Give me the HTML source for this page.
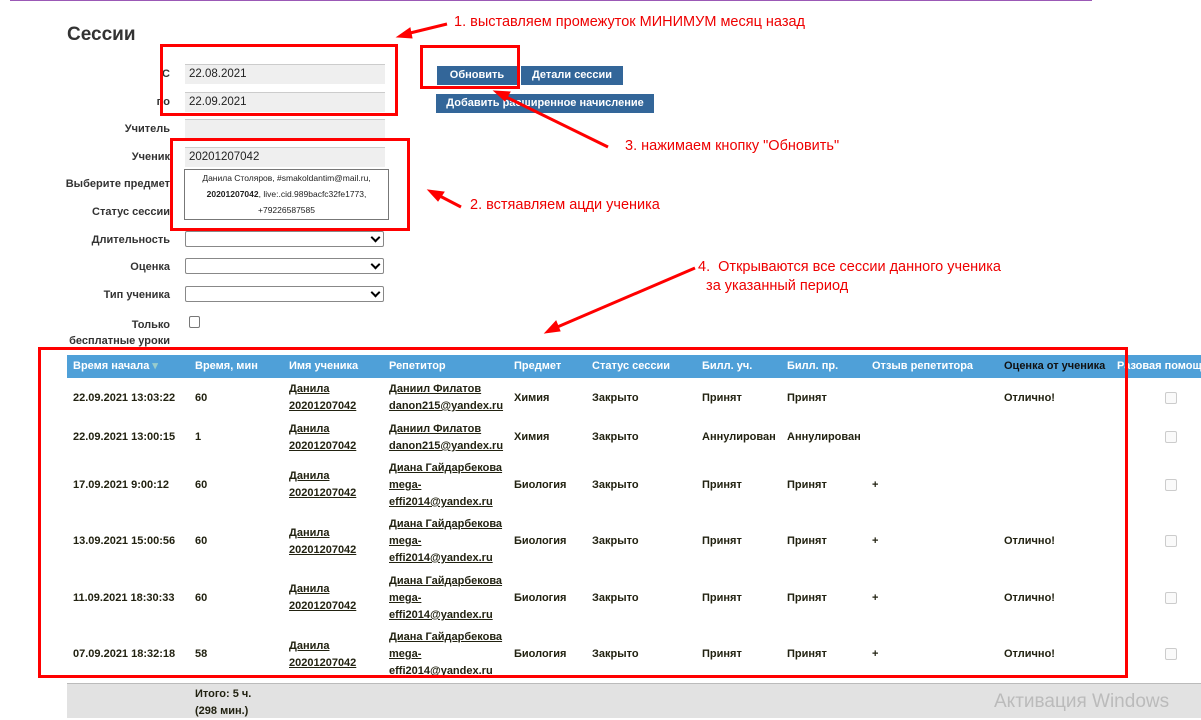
<!DOCTYPE html>
<html><head><meta charset="utf-8"><style>
body{margin:0;width:1201px;height:717px;overflow:hidden;background:#fff;font-family:"Liberation Sans",sans-serif;position:relative}
.a{position:absolute;white-space:nowrap}
.l{font-size:11px;font-weight:bold;color:#333;text-align:right;width:170px;left:0}
.in{position:absolute;left:185px;width:200px;height:20px;background:#efefef;border-top:1px solid #ccc;box-sizing:border-box;font-size:11.5px;color:#222;padding:3px 4px}
.sel{position:absolute;left:185px;width:199px;height:16px;border:1px solid #888;border-radius:2px;box-sizing:border-box;background:#fff}
.sel:after{content:"";position:absolute;right:4px;top:2px;width:5px;height:5px;border-right:2px solid #000;border-bottom:2px solid #000;transform:rotate(45deg)}
.btn{position:absolute;background:#336699;color:#fff;font-size:11px;font-weight:bold;text-align:center;line-height:19px;height:19px}
.rb{position:absolute;border:3px solid #f00;box-sizing:border-box}
.red{position:absolute;color:#e00;font-size:14.5px;white-space:nowrap}
.c{position:absolute;font-size:11px;font-weight:bold;color:#221;white-space:nowrap;line-height:17px}
.u{text-decoration:underline}
.h{position:absolute;top:355px;font-size:11px;font-weight:bold;color:#fff;line-height:23px;white-space:nowrap}
.cb{position:absolute;left:1165px;width:10px;height:10px;border:1px solid #ccc;border-radius:2px;background:#fafafa}
</style></head><body>
<div class="a" style="left:10px;top:0;width:1082px;height:1px;background:#9b59b6"></div>
<div class="a" style="left:67px;top:24px;font-size:19px;font-weight:bold;color:#333">Сессии</div>

<div class="a l" style="top:68px">С</div>
<div class="a l" style="top:96px">по</div>
<div class="a l" style="top:123px">Учитель</div>
<div class="a l" style="top:151px">Ученик</div>
<div class="a l" style="top:178px">Выберите предмет</div>
<div class="a l" style="top:206px">Статус сессии</div>
<div class="a l" style="top:234px">Длительность</div>
<div class="a l" style="top:261px">Оценка</div>
<div class="a l" style="top:289px">Тип ученика</div>
<div class="a l" style="top:317px;line-height:16px">Только<br>бесплатные уроки</div>

<div class="in" style="top:64px">22.08.2021</div>
<div class="in" style="top:92px">22.09.2021</div>
<div class="in" style="top:119px"></div>
<div class="in" style="top:147px">20201207042</div>
<div class="a" style="left:184px;top:169px;width:205px;height:51px;border:1px solid #777;box-sizing:border-box;background:#fff;font-size:8.5px;color:#222;text-align:center;line-height:16px;white-space:normal">Данила Столяров, #smakoldantim@mail.ru, <b>20201207042</b>, live:.cid.989bacfc32fe1773, +79226587585</div>
<div class="sel" style="top:231px"></div>
<div class="sel" style="top:258px"></div>
<div class="sel" style="top:286px"></div>
<div class="a" style="left:189px;top:316px;width:9px;height:10px;border:1px solid #777;border-radius:2px"></div>

<div class="btn" style="left:437px;top:66px;width:80px">Обновить</div>
<div class="btn" style="left:521px;top:66px;width:102px">Детали сессии</div>
<div class="btn" style="left:436px;top:94px;width:218px">Добавить расширенное начисление</div>

<div class="a" style="left:67px;top:355px;width:1134px;height:23px;background:#4fa0d8"></div>
<div class="h" style="left:73px">Время начала <span style="color:#9cc">▾</span></div>
<div class="h" style="left:195px">Время, мин</div>
<div class="h" style="left:289px">Имя ученика</div>
<div class="h" style="left:389px">Репетитор</div>
<div class="h" style="left:514px">Предмет</div>
<div class="h" style="left:592px">Статус сессии</div>
<div class="h" style="left:702px">Билл. уч.</div>
<div class="h" style="left:787px">Билл. пр.</div>
<div class="h" style="left:872px">Отзыв репетитора</div>
<div class="h" style="left:1004px;color:#111">Оценка от ученика</div>
<div class="h" style="left:1117px">Разовая помощь</div>

<div class="c" style="left:73px;top:390px">22.09.2021 13:03:22</div><div class="c" style="left:195px;top:390px">60</div>
<div class="c u" style="left:289px;top:381px">Данила<br>20201207042</div><div class="c u" style="left:389px;top:381px">Даниил Филатов<br>danon215@yandex.ru</div>
<div class="c" style="left:514px;top:390px">Химия</div><div class="c" style="left:592px;top:390px">Закрыто</div><div class="c" style="left:702px;top:390px">Принят</div><div class="c" style="left:787px;top:390px">Принят</div><div class="c" style="left:1004px;top:390px">Отлично!</div><div class="cb" style="top:392px"></div>

<div class="c" style="left:73px;top:429px">22.09.2021 13:00:15</div><div class="c" style="left:195px;top:429px">1</div>
<div class="c u" style="left:289px;top:421px">Данила<br>20201207042</div><div class="c u" style="left:389px;top:421px">Даниил Филатов<br>danon215@yandex.ru</div>
<div class="c" style="left:514px;top:429px">Химия</div><div class="c" style="left:592px;top:429px">Закрыто</div><div class="c" style="left:702px;top:429px">Аннулирован</div><div class="c" style="left:787px;top:429px">Аннулирован</div><div class="cb" style="top:431px"></div>

<div class="c" style="left:73px;top:477px">17.09.2021 9:00:12</div><div class="c" style="left:195px;top:477px">60</div>
<div class="c u" style="left:289px;top:468px">Данила<br>20201207042</div><div class="c u" style="left:389px;top:460px">Диана Гайдарбекова<br>mega-<br>effi2014@yandex.ru</div>
<div class="c" style="left:514px;top:477px">Биология</div><div class="c" style="left:592px;top:477px">Закрыто</div><div class="c" style="left:702px;top:477px">Принят</div><div class="c" style="left:787px;top:477px">Принят</div><div class="c" style="left:872px;top:477px">+</div><div class="cb" style="top:479px"></div>

<div class="c" style="left:73px;top:533px">13.09.2021 15:00:56</div><div class="c" style="left:195px;top:533px">60</div>
<div class="c u" style="left:289px;top:525px">Данила<br>20201207042</div><div class="c u" style="left:389px;top:516px">Диана Гайдарбекова<br>mega-<br>effi2014@yandex.ru</div>
<div class="c" style="left:514px;top:533px">Биология</div><div class="c" style="left:592px;top:533px">Закрыто</div><div class="c" style="left:702px;top:533px">Принят</div><div class="c" style="left:787px;top:533px">Принят</div><div class="c" style="left:872px;top:533px">+</div><div class="c" style="left:1004px;top:533px">Отлично!</div><div class="cb" style="top:535px"></div>

<div class="c" style="left:73px;top:590px">11.09.2021 18:30:33</div><div class="c" style="left:195px;top:590px">60</div>
<div class="c u" style="left:289px;top:581px">Данила<br>20201207042</div><div class="c u" style="left:389px;top:573px">Диана Гайдарбекова<br>mega-<br>effi2014@yandex.ru</div>
<div class="c" style="left:514px;top:590px">Биология</div><div class="c" style="left:592px;top:590px">Закрыто</div><div class="c" style="left:702px;top:590px">Принят</div><div class="c" style="left:787px;top:590px">Принят</div><div class="c" style="left:872px;top:590px">+</div><div class="c" style="left:1004px;top:590px">Отлично!</div><div class="cb" style="top:592px"></div>

<div class="c" style="left:73px;top:646px">07.09.2021 18:32:18</div><div class="c" style="left:195px;top:646px">58</div>
<div class="c u" style="left:289px;top:638px">Данила<br>20201207042</div><div class="c u" style="left:389px;top:629px">Диана Гайдарбекова<br>mega-<br>effi2014@yandex.ru</div>
<div class="c" style="left:514px;top:646px">Биология</div><div class="c" style="left:592px;top:646px">Закрыто</div><div class="c" style="left:702px;top:646px">Принят</div><div class="c" style="left:787px;top:646px">Принят</div><div class="c" style="left:872px;top:646px">+</div><div class="c" style="left:1004px;top:646px">Отлично!</div><div class="cb" style="top:648px"></div>

<div class="a" style="left:67px;top:683px;width:1134px;height:34px;background:#e2e2e2;border-top:1px solid #bbb"></div>
<div class="c" style="left:195px;top:686px">Итого: 5 ч.<br>(298 мин.)</div>
<div class="a" style="left:994px;top:691px;font-size:19px;color:#bbb">Активация Windows</div>

<div class="rb" style="left:160px;top:44px;width:238px;height:72px"></div>
<div class="rb" style="left:420px;top:45px;width:100px;height:44px"></div>
<div class="rb" style="left:170px;top:138px;width:240px;height:93px"></div>
<div class="rb" style="left:38px;top:347px;width:1090px;height:331px"></div>
<div class="red" style="left:454px;top:14px">1. выставляем промежуток МИНИМУМ месяц назад</div>
<div class="red" style="left:470px;top:197px">2. встяавляем ацди ученика</div>
<div class="red" style="left:625px;top:138px">3. нажимаем кнопку "Обновить"</div>
<div class="red" style="left:698px;top:258px;line-height:19px">4.&nbsp; Открываются все сессии данного ученика<br>&nbsp;&nbsp;за указанный период</div>
<svg class="a" style="left:0;top:0" width="1201" height="717">
<g stroke="#f00" stroke-width="3" fill="#f00">
<line x1="447" y1="24" x2="406" y2="34"/><polygon points="397,37 410,28 412,38" stroke-width="1"/>
<line x1="461" y1="207" x2="436" y2="194"/><polygon points="428,190 444,192 438,201" stroke-width="1"/>
<line x1="608" y1="147" x2="502" y2="95"/><polygon points="494,91 510,92 505,101" stroke-width="1"/>
<line x1="695" y1="268" x2="555" y2="328"/><polygon points="545,333 556,321 560,331" stroke-width="1"/>
</g></svg>
</body></html>
